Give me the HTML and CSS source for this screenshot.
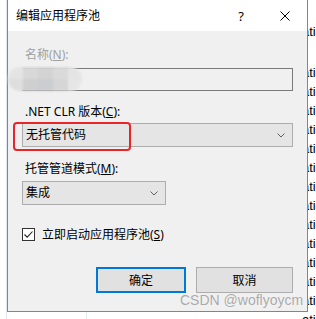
FILE: index.html
```html
<!DOCTYPE html>
<html lang="zh-CN">

<head>
  <meta charset="UTF-8">
  <title>编辑应用程序池</title>
  <link rel="stylesheet" href="styles.css">
</head>

<body>

<div class="sheet">
  <div class="sheet-row first">ation</div>
  <div class="sheet-rows">
    <div class="sheet-row">ation</div>
    <div class="sheet-row">ation</div>
    <div class="sheet-row">ation</div>
    <div class="sheet-row">ation</div>
    <div class="sheet-row">ation</div>
    <div class="sheet-row">ation</div>
    <div class="sheet-row">ation</div>
    <div class="sheet-row">ation</div>
    <div class="sheet-row">ation</div>
    <div class="sheet-row">ation</div>
    <div class="sheet-row">ation</div>
    <div class="sheet-row">ation</div>
    <div class="sheet-row">ation</div>
    <div class="sheet-row">ation</div>
  </div>
</div>

<div class="dialog">
  <div class="titlebar">
    <span class="title">编辑应用程序池</span>
    <span class="help">?</span>
    <span class="close">
      <svg width="10" height="10" viewBox="0 0 10 10">
        <path d="M0.5 0.5 L9.5 9.5 M9.5 0.5 L0.5 9.5" stroke="#000" stroke-width="1" fill="none"/>
      </svg>
    </span>
  </div>

  <div class="dialog-body">
    <div class="field-label disabled">名称(<u>N</u>):</div>
    <div class="textbox"></div>

    <div class="field-label">.NET CLR 版本(<u>C</u>):</div>
    <div class="combo">
      <span>无托管代码</span>
      <svg class="chevron" width="8" height="5" viewBox="0 0 8 5">
        <path d="M0.5 0.5 L4 4 L7.5 0.5" stroke="#606060" stroke-width="1" fill="none"/>
      </svg>
    </div>

    <div class="field-label">托管管道模式(<u>M</u>):</div>
    <div class="combo combo-small">
      <span>集成</span>
      <svg class="chevron" width="8" height="5" viewBox="0 0 8 5">
        <path d="M0.5 0.5 L4 4 L7.5 0.5" stroke="#606060" stroke-width="1" fill="none"/>
      </svg>
    </div>

    <div class="check-row">
      <span class="checkbox">
        <svg width="11" height="11" viewBox="0 0 11 11">
          <path d="M1.5 5.5 L4.2 8.2 L9.5 2.5" stroke="#222" stroke-width="1.1" fill="none"/>
        </svg>
      </span>
      <span>立即启动应用程序池(<u>S</u>)</span>
    </div>

    <div class="buttons">
      <button class="btn btn-default" type="button">确定</button>
      <button class="btn btn-cancel" type="button">取消</button>
    </div>
  </div>
</div>

<div class="smudge">
  <span class="s1"></span><span class="s2"></span><span class="s3"></span><span class="s4"></span><span class="s5"></span>
  <span class="s6"></span><span class="s7"></span><span class="s8"></span><span class="s9"></span><span class="s10"></span>
</div>
<div class="marker"></div>
<div class="watermark">CSDN @woflyoycm</div>

</body>
</html>
```

FILE: styles.css
```css
* {
  box-sizing: border-box;
}

body {
  margin: 0;
  width: 316px;
  height: 319px;
  overflow: hidden;
  position: relative;
  font-family: 'Noto Sans', 'Noto Sans CJK SC', sans-serif;
  font-size: 12px;
  color: #000;
  background-color: #fff;
  background-image:
    linear-gradient(#dfe6ee, #dfe6ee),
    linear-gradient(#e6ebf2, #e6ebf2);
  background-size: 1px 100%, 1px 100%;
  background-position: 6px 0, 86px 0;
  background-repeat: no-repeat;
}

/* page behind the dialog */
.sheet {
  padding-left: 302px;
  font-family: 'Liberation Sans', sans-serif;
  font-size: 13px;
  line-height: 19px;
  white-space: nowrap;
}

.sheet-row.first {
  padding-top: 22px;
}

.sheet-rows {
  margin-top: 22px;
}

/* dialog window */
.dialog {
  position: absolute;
  left: 7px;
  top: -1px;
  width: 301px;
  height: 313px;
  border: 1px solid #858585;
  background-color: #f0f0f0;
  display: flex;
  flex-direction: column;
}

.titlebar {
  height: 31px;
  flex: none;
  display: flex;
  align-items: center;
  padding-left: 8px;
  background-color: #fff;
}

.title {
  line-height: 16px;
}

.help {
  margin-left: auto;
  width: 20px;
  margin-right: 12px;
  text-align: center;
  font-size: 13px;
  line-height: 16px;
}

.close {
  width: 44px;
  height: 31px;
  display: flex;
  align-items: center;
  justify-content: center;
  padding-top: 1px;
}

.dialog-body {
  padding: 16px 14px 0;
}

.field-label {
  line-height: 16px;
  height: 16px;
  padding-left: 3px;
}

.field-label.disabled {
  color: #a0a0a0;
}

.textbox {
  margin-top: 5px;
  height: 23px;
  border: 1px solid #7a7a7a;
  margin-bottom: 13px;
}

.combo {
  margin-top: 3px;
  margin-bottom: 14px;
  height: 24px;
  border: 1px solid #adadad;
  background-color: #e5e5e5;
  display: flex;
  align-items: center;
  padding: 0 7px 0 3px;
  line-height: 16px;
}

.combo-small {
  width: 144px;
  margin-top: 4px;
  margin-bottom: 0;
}

.chevron {
  margin-left: auto;
}

.check-row {
  margin-top: 23px;
  display: flex;
  align-items: center;
  gap: 7px;
  line-height: 16px;
  height: 13px;
}

.checkbox {
  width: 13px;
  height: 13px;
  border: 1px solid #333;
  background-color: #fff;
  display: flex;
}

.buttons {
  margin-top: 26px;
  display: flex;
  justify-content: flex-end;
  gap: 10px;
}

.btn {
  height: 26px;
  margin: 0;
  padding: 0;
  font-family: 'Noto Sans', 'Noto Sans CJK SC', sans-serif;
  font-size: 12px;
  color: #000;
  background-color: #e1e1e1;
  border: 1px solid #adadad;
}

.btn-default {
  width: 90px;
  border: 2px solid #0078d7;
}

.btn-cancel {
  width: 97px;
}

/* overlays added on the screenshot */
.smudge {
  position: absolute;
  left: 8px;
  top: 67px;
  width: 74px;
  height: 24px;
  border-radius: 12px;
  overflow: hidden;
  display: grid;
  grid-template-columns: 15px 15px 15px 15px 14px;
  grid-template-rows: 12px 12px;
  filter: blur(1px);
}

.s1 { background: #e4e4e4; }
.s2 { background: #d8d8d8; }
.s3 { background: #d3d3d3; }
.s4 { background: #dadada; }
.s5 { background: #e4e4e4; }
.s6 { background: #dedede; }
.s7 { background: #cfcfcf; }
.s8 { background: #cbcdd1; }
.s9 { background: #d6d6d6; }
.s10 { background: #e6e6e6; }

.marker {
  position: absolute;
  left: 13px;
  top: 122px;
  width: 118px;
  height: 29px;
  border: 2px solid #e8262a;
  border-radius: 4px;
}

.watermark {
  position: absolute;
  left: 180px;
  top: 291px;
  font-family: 'Liberation Sans', sans-serif;
  font-size: 14px;
  line-height: 18px;
  color: #a9a9a9;
  text-shadow: 0 0 1px #fff;
  white-space: nowrap;
}
```
